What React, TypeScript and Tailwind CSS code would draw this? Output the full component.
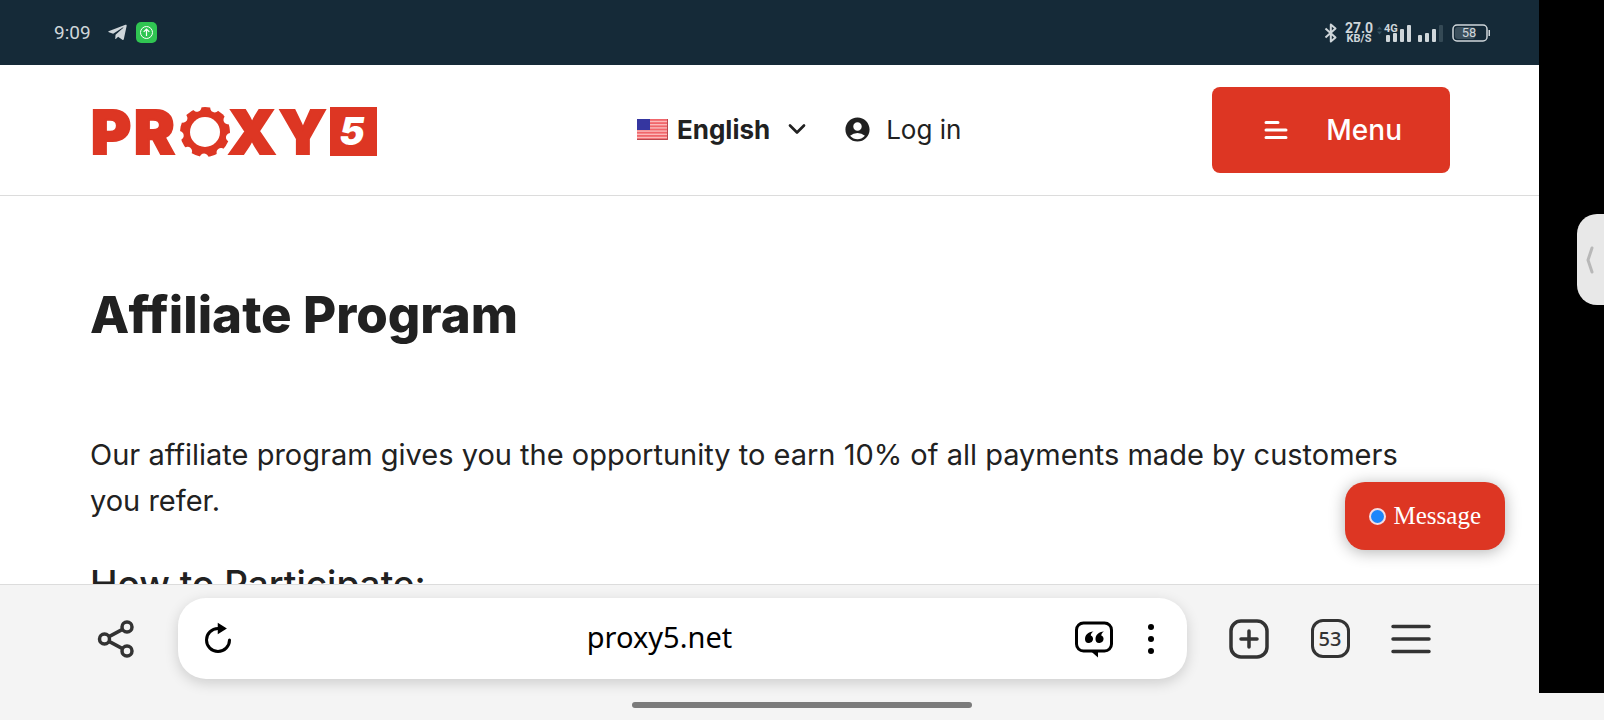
import type { ReactNode } from 'react'
import { ChevronDown } from 'lucide-react'
import { FaTelegramPlane } from 'react-icons/fa'
import { MdAccountCircle } from 'react-icons/md'

const NOTCHES = [0, 40, 80, 120, 160, 200, 240, 280, 320]
const STRIPES = [0, 1, 2, 3, 4, 5, 6]

function StatusBar() {
  return (
    <div className="flex h-[65px] shrink-0 items-center justify-between bg-[#152a38] pl-[54px] pr-12 text-[#cfd6da]">
      <div className="flex items-center">
        <time className="pt-0.5 font-[Roboto,sans-serif] text-[19px]">9:09</time>
        <FaTelegramPlane className="ml-4 size-[21px]" />
        <svg className="ml-2 size-[21px]" viewBox="0 0 21 21" fill="none" stroke="#fff">
          <rect width="21" height="21" rx="5" fill="#30c552" stroke="none" />
          <circle cx="10.5" cy="10.5" r="6" />
          <path d="M10.5 14V7.2M7.7 9.8l2.8-2.8 2.8 2.8" strokeWidth="1.2" />
        </svg>
      </div>

      <div className="flex items-center">
        <svg className="h-[20px] w-[14px]" viewBox="0 0 14 20" fill="none" stroke="currentColor" strokeWidth="2" strokeLinejoin="round">
          <path d="M1.5 5.5l10 9L6.8 18.5V1.5l4.700 4-10 9" />
        </svg>
        <div className="ml-[7px] flex w-[28px] flex-col items-center font-[Roboto,sans-serif] font-bold">
          <span className="text-[14px] leading-[12px]">27.0</span>
          <span className="text-[11px] leading-[10px]">KB/S</span>
        </div>
        <svg className="ml-1 h-[24px] w-[66px]" viewBox="0 -3 66 24" fill="currentColor">
          <path d="M0 5.500 2.500 2.500 5 5.500zM0 7.500h5L2.500 10.500z" fill="#33505f" />
          <text x="7" y="8" className="font-[Roboto,sans-serif] text-[11px] font-bold">4G</text>
          <rect x="9" y="11" width="4" height="7" rx="1" />
          <rect x="16" y="9" width="4" height="9" rx="1" />
          <rect x="23" y="5" width="4" height="13" rx="1" />
          <rect x="30" y="1" width="4" height="17" rx="1" />
          <rect x="41" y="11" width="4" height="7" rx="1" />
          <rect x="48" y="9" width="4" height="9" rx="1" />
          <rect x="55" y="5" width="4" height="13" rx="1" />
          <rect x="62" y="1" width="4" height="17" rx="1" fill="#344955" />
        </svg>
        <svg className="ml-[9px] h-[18px] w-[39px]" viewBox="0 0 39 18">
          <rect x="3" y="3" width="20" height="12" rx="3" fill="#3b4f5c" />
          <rect x="1" y="1" width="34" height="16" rx="4" fill="none" stroke="currentColor" strokeWidth="1.500" />
          <path d="M36.500 6h1.500v6h-1.500z" fill="currentColor" />
          <text x="17" y="13" textAnchor="middle" fill="currentColor" className="font-[Roboto,sans-serif] text-[13px]">58</text>
        </svg>
      </div>
    </div>
  )
}

function Logo() {
  return (
    <a href="#" aria-label="PROXY5">
      <svg className="h-[80px] w-[296px]" viewBox="0 -17 296 80" fill="#dd3623">
        <g className="font-[Inter,sans-serif] text-[61px] font-black" stroke="#dd3623" strokeWidth="2">
          <text x="1" y="47">P</text>
          <text x="44" y="47">R</text>
          <text x="138" y="47">X</text>
          <text x="189" y="47">Y</text>
        </g>
        <circle cx="115" cy="25" r="25" />
        {NOTCHES.map(a => (
          <circle key={a} cx="115" cy="-1" r="4.500" fill="#fff" transform={`rotate(${a + 22} 115 25)`} />
        ))}
        <circle cx="115" cy="25" r="15" fill="#fff" />
        <path d="M240 0h47v49h-47z" />
        <text x="262" y="38" textAnchor="middle" fill="#fff" className="font-[Inter,sans-serif] text-[38px] font-black italic">5</text>
      </svg>
    </a>
  )
}

function Flag() {
  return (
    <svg className="h-[21px] w-[31px]" viewBox="0 0 31 21">
      <path d="M0 0h31v21H0z" fill="#fbb9b9" />
      {STRIPES.map(i => (
        <rect key={i} y={i * 3.2} width="31" height="1.800" fill="#f0666b" />
      ))}
      <path d="M0 0h13v11H0z" fill="#3536a0" />
      <path d="M0 20.500h30.500V0" fill="none" stroke="#b9484e" />
    </svg>
  )
}

function Header() {
  return (
    <header className="flex h-[131px] shrink-0 items-center justify-between border-b border-[#dcdcdc] pl-[90px] pr-[89px]">
      <Logo />

      <div className="flex items-center pb-0.5">
        <button type="button" className="flex items-center text-[26px] font-bold">
          <Flag />
          <span className="ml-[9px]">English</span>
          <ChevronDown className="ml-[13px] size-7" strokeWidth={2.3} />
        </button>
        <a href="#" className="ml-8 flex items-center text-[26px]">
          <MdAccountCircle className="size-[29px]" />
          <span className="ml-[14px]">Log in</span>
        </a>
      </div>

      <button type="button" className="flex h-[86px] items-center rounded-lg bg-[#dd3623] pl-[52px] pr-12 text-[28px] font-medium text-white">
        <svg className="h-[20px] w-[24px]" viewBox="0 0 24 20" stroke="currentColor" strokeWidth="3" strokeLinecap="round">
          <path d="M2 2.500h12M2 10h20M2 17.500h20" />
        </svg>
        <span className="ml-[38px]">Menu</span>
      </button>
    </header>
  )
}

function ToolButton({ label, children }: { label: string; children: ReactNode }) {
  return (
    <button type="button" aria-label={label} className="flex size-10 shrink-0 items-center justify-center text-[#333]">
      {children}
    </button>
  )
}

function BrowserBar() {
  return (
    <nav className="flex h-[109px] shrink-0 items-center border-t border-[#dcdcdc] bg-[#f4f4f4] pb-px pl-24 pr-[108px]">
      <ToolButton label="Share">
        <svg className="size-10" viewBox="0 0 40 40" fill="none" stroke="currentColor" strokeWidth="3.500">
          <circle cx="8.500" cy="20" r="5" />
          <circle cx="31" cy="8" r="5" />
          <circle cx="31" cy="32" r="5" />
          <path d="M13 17.600l13.500-7.200M13 22.400l13.500 7.200" />
        </svg>
      </ToolButton>

      <div className="ml-[42px] flex h-[81px] flex-1 items-center rounded-[28px] bg-white pl-5 pr-4 text-black shadow-[0_4px_14px_rgba(0,0,0,0.16)]">
        <button type="button" aria-label="Reload" className="size-10">
          <svg className="size-10" viewBox="0 0 40 40" fill="none" stroke="currentColor" strokeWidth="3" strokeLinecap="round">
            <path d="M20 9.500A11.500 11.500 0 1 0 31.500 21" />
            <path d="M20.500 5v9l7-4.500z" fill="currentColor" strokeWidth="1.500" />
          </svg>
        </button>
        <input
          type="text"
          aria-label="Address"
          defaultValue="proxy5.net"
          className="min-w-0 flex-1 pb-1 pl-2 text-center font-['Noto_Sans',sans-serif] text-[29px] outline-none"
        />
        <button type="button" aria-label="Reader" className="size-10">
          <svg className="size-10" viewBox="0 0 40 40" fill="currentColor">
            <rect x="3.500" y="4" width="35" height="28" rx="7" fill="none" stroke="currentColor" strokeWidth="3" />
            <path d="M17 31.500h8v7z" />
            <path d="M20.500 12.500c-1.800 1-2.600 2.300-2.700 4a4 4 0 1 1-5.800 3.700c0-4 3-7.400 8.500-7.700zM31 12.500c-1.800 1-2.600 2.300-2.700 4a4 4 0 1 1-5.800 3.700c0-4 3-7.400 8.500-7.700z" />
          </svg>
        </button>
        <button type="button" aria-label="More" className="ml-[18px] flex size-10 items-center justify-center">
          <svg className="h-[32px] w-[8px]" viewBox="0 0 8 32" fill="currentColor">
            <circle cx="4" cy="4" r="3" />
            <circle cx="4" cy="16" r="3" />
            <circle cx="4" cy="28" r="3" />
          </svg>
        </button>
      </div>

      <div className="ml-[42px] flex gap-[41px]">
        <ToolButton label="New tab">
          <svg className="size-10" viewBox="0 0 40 40" fill="none" stroke="currentColor" strokeWidth="3.500" strokeLinecap="round">
            <rect x="2" y="2" width="36" height="36" rx="10" />
            <path d="M20 12v16M12 20h16" />
          </svg>
        </ToolButton>
        <ToolButton label="Tabs, 53 open">
          <span className="flex size-[39px] items-center justify-center rounded-xl border-3 border-current font-['Noto_Sans',sans-serif] text-[20px] font-medium">
            53
          </span>
        </ToolButton>
        <ToolButton label="Menu">
          <svg className="size-10" viewBox="0 0 40 40" stroke="currentColor" strokeWidth="3.500" strokeLinecap="round">
            <path d="M2 7.500h36M2 20h36M2 32.500h36" />
          </svg>
        </ToolButton>
      </div>
    </nav>
  )
}

export default function App() {
  return (
    <div className="flex h-screen flex-col bg-[#f4f4f4] font-[Inter,sans-serif] text-[#212121]">
      <div className="flex min-h-0 flex-1">
        <div className="flex min-w-0 flex-1 flex-col bg-white">
          <StatusBar />
          <Header />
          <div className="relative min-h-0 flex-1">
            <main className="h-full overflow-hidden px-[90px] pt-[87px]">
              <h1 className="text-[51px] leading-[64px] font-extrabold">Affiliate Program</h1>
              <p className="mt-[85px] text-[29px] leading-[46px]">
                Our affiliate program gives you the opportunity to earn 10% of all payments made by customers you refer.
              </p>
              <h2 className="mt-[38px] text-[37px] leading-[44px] font-medium">How to Participate:</h2>
            </main>
            <button
              type="button"
              className="absolute right-[34px] bottom-[34px] flex h-[68px] items-center gap-2 rounded-[20px] bg-[#dd3623] px-6 font-['Liberation_Serif',serif] text-[25px] text-white shadow-[0_2px_16px_rgba(0,0,0,0.3)]"
            >
              <span className="size-[17px] rounded-full border-2 border-[#f3dce4] bg-[#1d86fb]" />
              Message
            </button>
          </div>
          <BrowserBar />
        </div>

        <div className="flex w-[65px] flex-col items-end bg-black pt-[214px]">
          <button type="button" aria-label="Open side panel" className="flex h-[91px] w-[27px] items-center rounded-l-[20px] bg-[#e8e8e8] pl-2">
            <svg className="h-[28px] w-[10px]" viewBox="0 0 10 28" fill="none" stroke="#b8b8b8" strokeWidth="3" strokeLinecap="round" strokeLinejoin="round">
              <path d="M7 2 3 14l4 12" />
            </svg>
          </button>
        </div>
      </div>

      <div className="flex h-[27px] shrink-0 items-center justify-center pb-1">
        <div className="h-[6px] w-[340px] rounded-full bg-[#7b7b7b]" />
      </div>
    </div>
  )
}
